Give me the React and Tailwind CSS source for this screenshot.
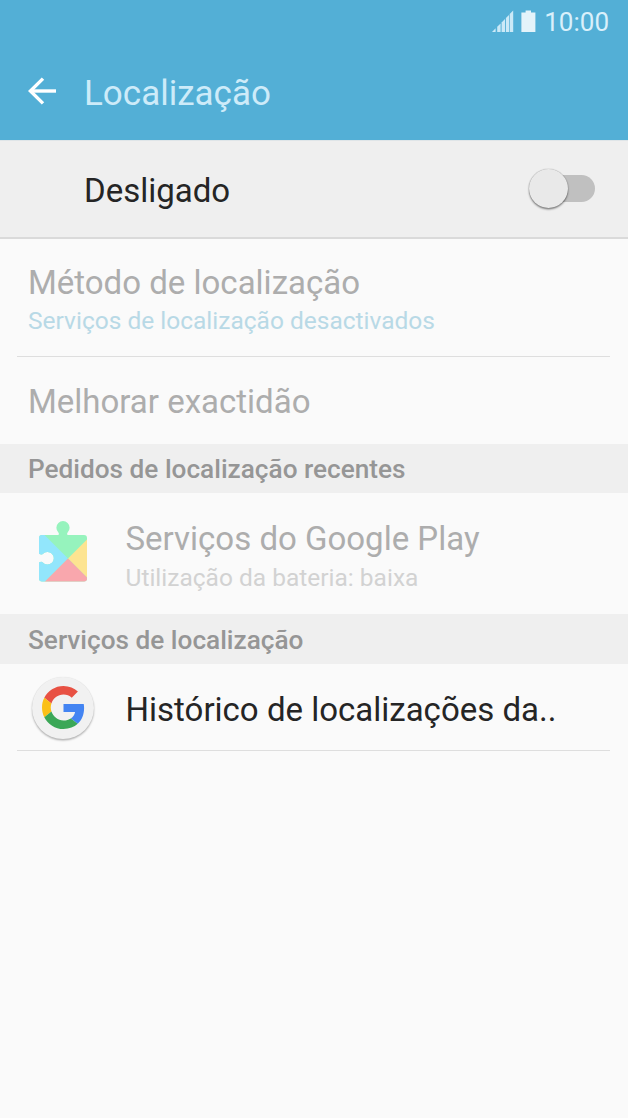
import React from 'react';
import clsx from 'clsx';

const StatusBar = () => (
  <div className="flex h-[44px] items-center justify-end pr-[19px] text-[#d9f0fb]">
    <svg width="22" height="22" viewBox="0 0 22 22" fill="#cbe9f7" className="mr-[7px] -mt-[2px]">
      <path d="M0 22 L3.6 18.2 V22Z" />
      <path d="M5.2 16.8 L8.6 13.4 V22 H5.2Z" />
      <path d="M9.6 12.4 L13 9 V22 H9.6Z" />
      <path d="M13.9 8.1 L17 5 V22 H13.9Z" />
      <path d="M17.7 4.1 L21.2 0.6 V22 H17.7Z" />
    </svg>
    <svg width="15" height="22" viewBox="0 0 15 22" fill="#e4f3fa" className="mr-[8px] -mt-[2px]">
      <path d="M4.6 0.6H10V2.4H14.4V22H0.4V2.4H4.6Z" />
    </svg>
    <span className="text-[26px] leading-[44px]">10:00</span>
  </div>
);

const BackArrow = () => (
  <svg width="28" height="28" viewBox="0 0 28 28" fill="none" stroke="#fff" strokeWidth="3.4" className="-mt-[2px]">
    <path d="M15 1.6 L2.4 14 L15 26.4" />
    <path d="M2.4 14 H28" />
  </svg>
);

const Toggle = () => (
  <div className="relative mt-[2px] h-[42px] w-[66px]">
    <div className="absolute top-[6px] right-0 h-[27px] w-[48px] rounded-full bg-[#c0c0c0]" />
    <div className="absolute top-0 left-0 size-[39px] rounded-full bg-[#e9e9e9] shadow-[0_1.5px_2px_rgba(0,0,0,0.45),0_0_1px_rgba(0,0,0,0.4)]" />
  </div>
);

const PlayServicesIcon = () => (
  <svg width="48" height="62" viewBox="0 0 48 62">
    <defs>
      <clipPath id="puzzle">
        <path d="M3 15 H19.4 Q20.4 13.6 19.2 12.2 A6.6 6.6 0 1 1 28.8 12.2 Q27.6 13.6 28.6 15 H45 A3 3 0 0 1 48 18 V58.5 A3 3 0 0 1 45 61.5 H3 A3 3 0 0 1 0 58.5 V42.6 Q2.2 41.2 3.8 42.4 A6.3 6.3 0 1 0 3.8 34 Q2.2 35.2 0 33.8 V18 A3 3 0 0 1 3 15Z" />
      </clipPath>
    </defs>
    <g clipPath="url(#puzzle)">
      <rect width="48" height="62" fill="#96f3bd" />
      <path d="M0 9.5 L29 38.5 L0 67.5Z" fill="#92e6fc" />
      <path d="M29 38.5 L48 19.5 V57.5Z" fill="#fde491" />
      <path d="M29 38.5 L52 61.5 V62 H5.5Z" fill="#f9a7ad" />
    </g>
  </svg>
);

const GoogleIcon = () => (
  <div className="mt-px flex size-[62px] items-center justify-center rounded-full bg-[#f1f1f1] shadow-[0_1.5px_2px_rgba(0,0,0,0.28),0_0_1px_rgba(0,0,0,0.1)]">
    <svg width="43" height="43" viewBox="0 0 48 48">
      <path fill="#e85143" d="M24 9.5c3.54 0 6.71 1.22 9.21 3.6l6.85-6.85C35.9 2.38 30.47 0 24 0 14.62 0 6.51 5.38 2.56 13.22l7.98 6.19C12.43 13.72 17.74 9.5 24 9.5z" />
      <path fill="#4384f2" d="M46.98 24.55c0-1.57-.15-3.09-.38-4.55H24v9.02h12.94c-.58 2.96-2.26 5.48-4.78 7.18l7.73 6c4.51-4.18 7.09-10.36 7.09-17.65z" />
      <path fill="#fbc017" d="M10.53 28.59c-.48-1.45-.76-2.99-.76-4.59s.27-3.14.76-4.59l-7.98-6.19C.92 16.46 0 20.12 0 24c0 3.88.92 7.54 2.56 10.78l7.97-6.19z" />
      <path fill="#3ba757" d="M24 48c6.48 0 11.93-2.13 15.89-5.81l-7.73-6c-2.15 1.45-4.92 2.3-8.16 2.3-6.26 0-11.57-4.22-13.47-9.91l-7.98 6.19C6.51 42.62 14.62 48 24 48z" />
    </svg>
  </div>
);

const SectionHeader = ({ className, children }) => (
  <h2 className={clsx('flex items-center bg-[#efefef] pl-[28px] text-[26.2px] font-medium text-[#969696]', className)}>
    {children}
  </h2>
);

const Divider = () => <div className="mr-[18px] ml-[17px] h-px bg-[#dedede]" />;

const App = () => {
  return (
    <div className="h-[1118px] w-[628px] overflow-hidden bg-[#fafafa] font-['Roboto',sans-serif] whitespace-nowrap">
      <header className="h-[140px] bg-[#53afd6]">
        <StatusBar />
        <div className="flex h-[96px] items-center pl-[28px]">
          <BackArrow />
          <h1 className="ml-[28px] pt-[4px] text-[35px] leading-[40px] text-[#cdebf9]">Localização</h1>
        </div>
      </header>

      <section className="flex h-[99px] items-center justify-between border-t border-b-2 border-t-[#dfe5e8] border-b-[#dadada] bg-[#efefef] pr-[33px] pl-[84px]">
        <span className="pt-[4px] text-[33px] leading-[40px] text-[#252525]">Desligado</span>
        <Toggle />
      </section>

      <section>
        <div className="flex h-[117px] flex-col pt-[24px] pl-[28px]">
          <span className="text-[33px] leading-[40px] text-[#adadad]">Método de localização</span>
          <span className="text-[24.5px] leading-[36px] text-[#b8d9e6]">Serviços de localização desactivados</span>
        </div>
        <Divider />
        <div className="flex h-[87px] items-center pt-[2px] pl-[28px] text-[33px] text-[#adadad]">Melhorar exactidão</div>
      </section>

      <SectionHeader className="h-[49px] pt-[3px]">Pedidos de localização recentes</SectionHeader>
      <div className="flex h-[121px] pl-[39px]">
        <div className="pt-[27px]">
          <PlayServicesIcon />
        </div>
        <div className="ml-[38.5px] flex flex-col pt-[26px]">
          <span className="text-[33px] leading-[40px] text-[#adadad]">Serviços do Google Play</span>
          <span className="text-[24.5px] leading-[38px] text-[#d2d2d2]">Utilização da bateria: baixa</span>
        </div>
      </div>

      <SectionHeader className="h-[50px] pt-[4px]">Serviços de localização</SectionHeader>
      <div className="flex h-[86px] items-center pl-[32px]">
        <GoogleIcon />
        <span className="ml-[31.5px] pt-[6px] text-[33px] leading-[40px] text-[#252525]">Histórico de localizações da..</span>
      </div>
      <Divider />
    </div>
  );
};

export default App;
